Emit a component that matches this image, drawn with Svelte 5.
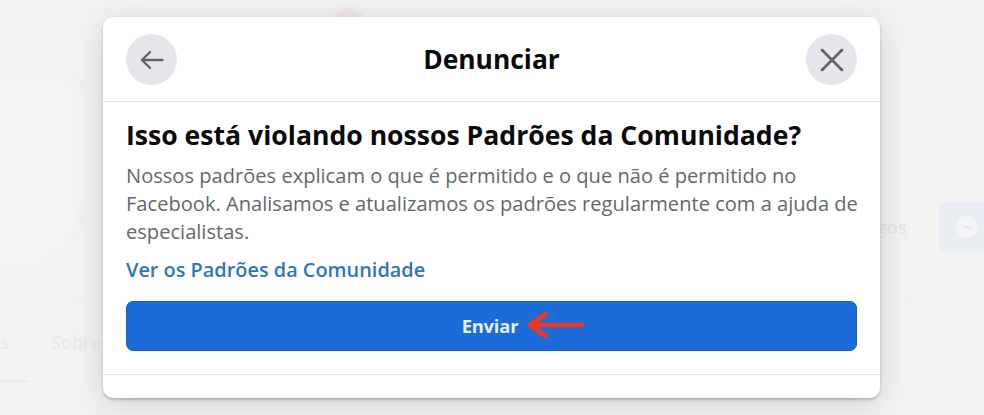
<script lang="ts">
  const lines = [
    "Nossos padrões explicam o que é permitido e o que não é permitido no",
    "Facebook. Analisamos e atualizamos os padrões regularmente com a ajuda de",
    "especialistas.",
  ];
</script>

<div class="page">
  <div class="backdrop" aria-hidden="true">
    <div class="avatar"></div>
    <div class="top-dot"></div>
    <div class="rule"></div>
    <div class="underline"></div>
    <span class="ghost ghost-s">s</span>
    <span class="ghost ghost-sobre">Sobre</span>
    <span class="ghost ghost-gos">gos</span>
    <div class="msg-btn">
      <svg width="24" height="24" viewBox="0 0 24 24">
        <circle cx="12" cy="12" r="11" fill="#f3f4f7" />
        <path d="M6 14.5L10.5 10L13.5 12.5L18 9.5L13.5 14.5L10.5 12L6 14.5Z" fill="#e3e5ea" />
      </svg>
    </div>
  </div>

  <div class="modal">
    <header class="head">
      <button class="round" aria-label="Voltar">
        <svg width="26" height="26" viewBox="0 0 26 26" fill="none" stroke="#5f6368" stroke-width="2.4" stroke-linecap="round" stroke-linejoin="round">
          <path d="M3 13H23.5M11 5L3 13L11 21" />
        </svg>
      </button>
      <h2>Denunciar</h2>
      <button class="round" aria-label="Fechar">
        <svg width="24" height="24" viewBox="0 0 24 24" fill="none" stroke="#5f6368" stroke-width="2.6" stroke-linecap="round">
          <path d="M2 2L22 22M22 2L2 22" />
        </svg>
      </button>
    </header>

    <section class="content">
      <h3>Isso está violando nossos Padrões da Comunidade?</h3>
      <p>
        {#each lines as line}
          <span>{line}</span>
        {/each}
      </p>
      <a href="#padroes">Ver os Padrões da Comunidade</a>
      <button class="send">
        <span class="label">Enviar</span>
        <svg class="pointer" width="60" height="28" viewBox="0 0 60 28" fill="none" stroke="#f0361e" stroke-linecap="round" stroke-linejoin="round">
          <path d="M7 14H57" stroke-width="4.4" />
          <path d="M20 3.5L5 14L20 24.5" stroke-width="5" />
        </svg>
      </button>
    </section>

    <div class="foot"></div>
  </div>
</div>

<style>
  :global(body) {
    margin: 0;
  }

  .page {
    position: relative;
    width: 984px;
    height: 415px;
    overflow: hidden;
    background: #f2f2f3;
    display: flex;
    justify-content: center;
    padding: 17px 1px 0 0;
    box-sizing: border-box;
    font-family: "Open Sans", "Noto Sans", sans-serif;
  }

  .backdrop {
    position: absolute;
    inset: 0;
  }

  .avatar {
    position: absolute;
    left: -60px;
    top: 80px;
    width: 140px;
    height: 188px;
    border-radius: 40px 20px 70px 60px;
    background: #f5f3f2;
    filter: blur(3px);
  }

  .top-dot {
    position: absolute;
    left: 331px;
    top: 8px;
    width: 36px;
    height: 36px;
    border-radius: 50%;
    background: #f0e6e7;
    filter: blur(1px);
  }

  .rule {
    position: absolute;
    left: 0;
    right: 0;
    top: 298px;
    height: 1px;
    background: #efeff0;
  }

  .underline {
    position: absolute;
    left: 0;
    top: 380px;
    width: 28px;
    height: 2px;
    background: #e8e9ee;
  }

  .ghost {
    position: absolute;
    font-size: 18px;
    font-weight: 600;
    color: #e9e9ea;
    filter: blur(0.5px);
  }

  .ghost-s {
    left: 0;
    top: 330px;
  }

  .ghost-sobre {
    left: 51px;
    top: 330px;
  }

  .ghost-gos {
    left: 877px;
    top: 215px;
    color: #e6e6e7;
  }

  .msg-btn {
    position: absolute;
    left: 939px;
    top: 202px;
    width: 60px;
    height: 50px;
    border-radius: 6px;
    background: #e9ecf3;
    display: flex;
    align-items: center;
    padding-left: 16px;
    box-sizing: border-box;
  }

  .modal {
    position: relative;
    width: 777px;
    height: 381px;
    background: #fff;
    border-radius: 10px;
    box-shadow: 0 2px 3px rgba(0, 0, 0, 0.22), 0 6px 34px rgba(0, 0, 0, 0.13);
    display: flex;
    flex-direction: column;
  }

  .head {
    height: 85px;
    flex-shrink: 0;
    box-sizing: border-box;
    border-bottom: 1px solid #e4e4e6;
    padding: 17px 23px 0;
    display: flex;
    justify-content: space-between;
    align-items: flex-start;
  }

  .round {
    width: 51px;
    height: 51px;
    border: none;
    border-radius: 50%;
    background: #e4e6eb;
    padding: 0;
    display: flex;
    align-items: center;
    justify-content: center;
  }

  h2 {
    margin: 0;
    font-size: 26.4px;
    font-weight: 700;
    line-height: 51px;
    color: #0a0a0a;
  }

  .content {
    flex: 1;
    padding: 17px 23px 0;
    display: flex;
    flex-direction: column;
    align-items: stretch;
  }

  h3 {
    margin: 0;
    font-size: 26.6px;
    font-weight: 700;
    line-height: 32px;
    color: #0a0a0a;
    white-space: nowrap;
  }

  p {
    margin: 11px 0 0;
    font-size: 20.1px;
    line-height: 28px;
    color: #65676b;
  }

  p span {
    display: block;
    white-space: nowrap;
  }

  a {
    margin-top: 10px;
    font-size: 19.9px;
    font-weight: 600;
    line-height: 28px;
    color: #2d76bd;
    text-decoration: none;
  }

  .send {
    position: relative;
    margin-top: 17px;
    height: 50px;
    border: 1px solid #1a5fb4;
    border-radius: 7px;
    background: #1b6cd8;
    color: #e8f3ff;
    font-family: inherit;
    font-size: 18.4px;
    font-weight: 700;
    letter-spacing: -0.2px;
    display: flex;
    align-items: center;
    justify-content: center;
    padding: 0 3px 2px 0;
  }

  .pointer {
    position: absolute;
    left: 398px;
    top: 9px;
  }

  .foot {
    height: 24px;
    flex-shrink: 0;
    border-top: 1px solid #e4e4e6;
    box-sizing: border-box;
  }
</style>
